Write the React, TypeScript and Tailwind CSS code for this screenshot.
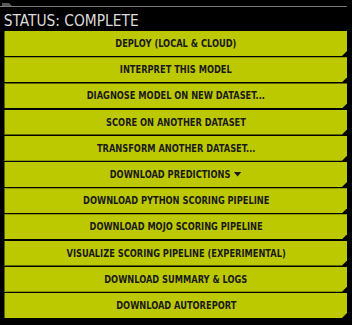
import React from "react";

const items: { label: string; caret?: boolean }[] = [
  { label: "DEPLOY (LOCAL & CLOUD)" },
  { label: "INTERPRET THIS MODEL" },
  { label: "DIAGNOSE MODEL ON NEW DATASET..." },
  { label: "SCORE ON ANOTHER DATASET" },
  { label: "TRANSFORM ANOTHER DATASET..." },
  { label: "DOWNLOAD PREDICTIONS", caret: true },
  { label: "DOWNLOAD PYTHON SCORING PIPELINE" },
  { label: "DOWNLOAD MOJO SCORING PIPELINE" },
  { label: "VISUALIZE SCORING PIPELINE (EXPERIMENTAL)" },
  { label: "DOWNLOAD SUMMARY & LOGS" },
  { label: "DOWNLOAD AUTOREPORT" },
];

const font = '"Liberation Sans Narrow", "DejaVu Sans Condensed", "Liberation Sans", sans-serif';

export default function App() {
  return (
    <div className="w-[352px] h-[325px] bg-black overflow-hidden">
      <div className="relative pt-[6px] pr-[5px]">
        <div className="absolute left-[2px] top-[3px] w-[10px] h-[3px] bg-[#5a5a5a] [clip-path:polygon(0_0,70%_0,100%_100%,0_100%)]" />
        <div className="h-px bg-[#7a7a7a]" />
      </div>
      <div
        className="pl-[4px] pt-[2px] h-[24px] leading-[24px] text-[16.5px] text-[#dcdcdc] origin-left scale-x-[0.93]"
        style={{ fontFamily: font }}
      >
        STATUS: COMPLETE
      </div>
      <div className="flex flex-col gap-[1.2px] pl-[4px] pr-[5px]">
        {items.map((it) => (
          <div
            key={it.label}
            className="h-[25px] bg-[#bcc800] border-l border-[#5f6600] flex items-center justify-center text-[10px] font-bold text-[#1a1a1a] [clip-path:polygon(0_0,100%_0,100%_calc(100%-5px),calc(100%-5px)_100%,0_100%)]"
            style={{ fontFamily: font }}
          >
            <div className="flex items-center gap-[4px] scale-x-[0.92]">
              <span>{it.label}</span>
              {it.caret && (
                <svg width="8" height="5" viewBox="0 0 8 5" className="mt-[1px]">
                  <path d="M0 0 H8 L4 4.5 Z" fill="#1a1a1a" />
                </svg>
              )}
            </div>
          </div>
        ))}
      </div>
    </div>
  );
}
